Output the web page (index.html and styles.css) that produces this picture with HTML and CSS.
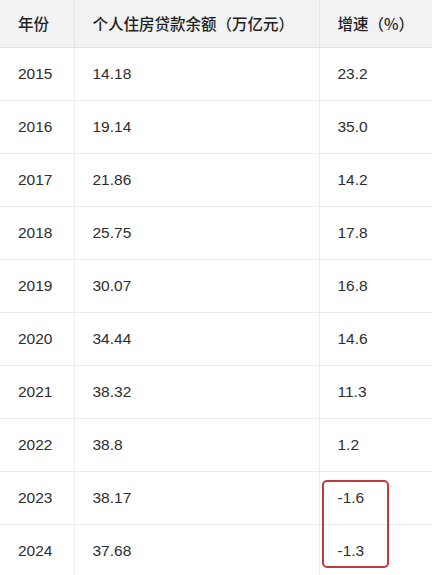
FILE: index.html
```html
<!DOCTYPE html>
<html lang="zh-CN">
<head>
<meta charset="utf-8">
<link rel="stylesheet" href="styles.css">
</head>
<body>
<div class="wrap">
<table class="tbl">
<colgroup><col class="c1"><col class="c2"><col class="c3"></colgroup>
<thead>
<tr><th>年份</th><th>个人住房贷款余额（万亿元）</th><th>增速（%）</th></tr>
</thead>
<tbody>
<tr><td>2015</td><td>14.18</td><td>23.2</td></tr>
<tr><td>2016</td><td>19.14</td><td>35.0</td></tr>
<tr><td>2017</td><td>21.86</td><td>14.2</td></tr>
<tr><td>2018</td><td>25.75</td><td>17.8</td></tr>
<tr><td>2019</td><td>30.07</td><td>16.8</td></tr>
<tr><td>2020</td><td>34.44</td><td>14.6</td></tr>
<tr><td>2021</td><td>38.32</td><td>11.3</td></tr>
<tr><td>2022</td><td>38.8</td><td>1.2</td></tr>
<tr><td>2023</td><td>38.17</td><td>-1.6</td></tr>
<tr><td>2024</td><td>37.68</td><td>-1.3</td></tr>
</tbody>
</table>
<div class="mark"></div>
</div>
</body>
</html>
```
FILE: styles.css
```css
html, body {
  margin: 0;
  padding: 0;
  background: #ffffff;
}
.wrap {
  position: relative;
  width: 432px;
  height: 575px;
  overflow: hidden;
}
.tbl {
  width: 432px;
  border-collapse: collapse;
  table-layout: fixed;
  font-family: "Liberation Sans", "Noto Sans CJK SC", sans-serif;
}
.c1 { width: 74px; }
.c2 { width: 245px; }
.c3 { width: 113px; }
.tbl th,
.tbl td {
  box-sizing: border-box;
  white-space: nowrap;
}
.tbl th {
  height: 47px;
  background: #f2f2f2;
  color: #1f1f1f;
  font-family: "Noto Sans CJK SC", sans-serif;
  font-size: 15.5px;
  font-weight: 500;
  text-align: left;
  padding: 0 0 0 18px;
  border-bottom: 1px solid #e2e2e2;
  border-right: 1px solid #e6e6e6;
}
.tbl th:last-child { border-right: none; }
.tbl td {
  height: 53px;
  color: #2e2e2e;
  font-size: 15.5px;
  padding: 0 0 0 18px;
  border-bottom: 1px solid #ececec;
  border-right: 1px solid #ececec;
}
.tbl td:last-child { border-right: none; }
.mark {
  position: absolute;
  left: 322px;
  top: 480px;
  width: 63px;
  height: 84px;
  border: 2.5px solid #c23a3c;
  border-radius: 5px;
}
```
